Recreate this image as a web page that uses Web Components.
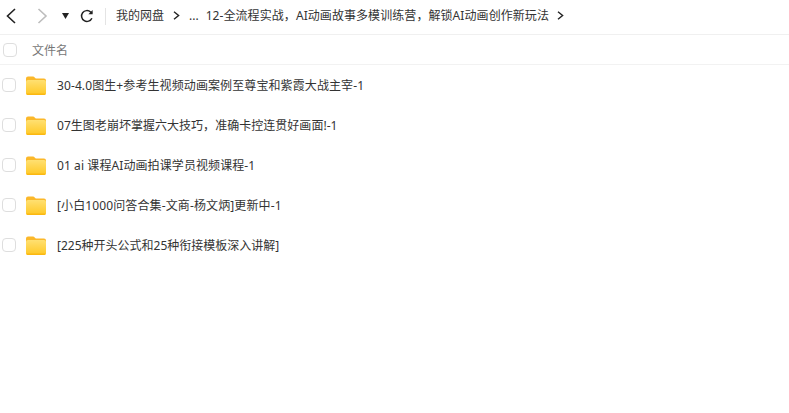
<!DOCTYPE html>
<html lang="zh">
<head>
<meta charset="utf-8">
<title>文件列表</title>
<style>
  html, body { margin: 0; height: 100%; background: #fff; }
  body { font-family: "Noto Sans", "Noto Sans CJK SC", sans-serif; color: #333; overflow: hidden; }
</style>
</head>
<body>
<pan-toolbar>
  <pan-crumb>我的网盘</pan-crumb>
  <pan-crumb>...</pan-crumb>
  <pan-crumb>12-全流程实战，AI动画故事多模训练营，解锁AI动画创作新玩法</pan-crumb>
</pan-toolbar>
<pan-header>文件名</pan-header>
<pan-row style="--track:.1px">30-4.0图生+参考生视频动画案例至尊宝和紫霞大战主宰-1</pan-row>
<pan-row style="--track:.03px">07生图老崩坏掌握六大技巧，准确卡控连贯好画面!-1</pan-row>
<pan-row style="--track:.09px">01 ai 课程AI动画拍课学员视频课程-1</pan-row>
<pan-row style="--track:.12px">[小白1000问答合集-文商-杨文炳]更新中-1</pan-row>
<pan-row>[225种开头公式和25种衔接模板深入讲解]</pan-row>

<script>
const CHECK = `
  .check {
    width: 12px; height: 12px;
    border: 1px solid #dedede;
    border-radius: 4px;
    background: #fff;
    flex: none;
  }
`;

class PanToolbar extends HTMLElement {
  constructor() {
    super();
    const shadow = this.attachShadow({ mode: "open" });
    shadow.innerHTML = `
      <style>
        :host {
          display: flex;
          align-items: center;
          height: 32px;
          padding: 0 0 2px 6px;
          border-bottom: 1px solid #f0f0f0;
        }
        svg { display: block; flex: none; }
        .back { margin-right: 20px; }
        .forward { margin-right: 14px; }
        .drop { margin-right: 11px; }
        .sep { width: 1px; height: 17px; background: #e4e4e4; margin: 0 10px 0 11px; flex: none; }
        .crumbs { display: flex; align-items: center; margin-top: -2px; }
      </style>
      <svg class="back" width="11" height="16" viewBox="0 0 11 16" fill="none" stroke="#222" stroke-width="1.6"><path d="M9 1 1.5 8 9 15"/></svg>
      <svg class="forward" width="11" height="16" viewBox="0 0 11 16" fill="none" stroke="#bdbdbd" stroke-width="1.6"><path d="M1.5 1 9 8l-7.5 7"/></svg>
      <svg class="drop" width="7" height="6" viewBox="0 0 7 6" fill="#222"><path d="M0 0h7L3.5 6z"/></svg>
      <svg width="14" height="14" viewBox="0 0 14 14" fill="none" stroke="#222" stroke-width="1.5"><path d="M11.9 9.2A5.4 5.4 0 1 1 10.6 3L12 4.4"/><path d="M12.6 1v4.2H8.4" fill="#222" stroke="none"/></svg>
      <div class="sep"></div>
      <div class="crumbs"><slot></slot></div>
    `;
  }
}

class PanCrumb extends HTMLElement {
  constructor() {
    super();
    const shadow = this.attachShadow({ mode: "open" });
    shadow.innerHTML = `
      <style>
        :host { display: flex; align-items: center; font-size: 12px; color: #333; white-space: nowrap; }
        svg { margin: 0 9px; display: block; }
        :host(:nth-of-type(2)) svg { display: none; }
        :host(:nth-of-type(2)) { margin-right: 7px; }
        :host(:nth-of-type(3)) { letter-spacing: .07px; }
        :host(:nth-of-type(3)) svg { margin: 0 8px; }
      </style>
      <slot></slot>
      <svg width="7" height="9" viewBox="0 0 7 9" fill="none" stroke="#222" stroke-width="1.4"><path d="M1 .8 5.6 4.5 1 8.2"/></svg>
    `;
  }
}

class PanHeader extends HTMLElement {
  constructor() {
    super();
    const shadow = this.attachShadow({ mode: "open" });
    shadow.innerHTML = `
      <style>
        :host {
          display: flex;
          align-items: center;
          height: 29px;
          padding-left: 3px;
          border-bottom: 1px solid #f2f2f2;
          font-size: 12px;
          color: #777;
        }
        ${CHECK}
        span { margin-left: 15px; }
      </style>
      <div class="check"></div>
      <span><slot></slot></span>
    `;
  }
}

class PanRow extends HTMLElement {
  constructor() {
    super();
    const shadow = this.attachShadow({ mode: "open" });
    shadow.innerHTML = `
      <style>
        :host {
          display: flex;
          align-items: center;
          height: 40px;
          padding-left: 2px;
          font-size: 12px;
          color: #333;
          white-space: nowrap;
          letter-spacing: var(--track, 0);
        }
        ${CHECK}
        svg { margin: 0 11px 0 10px; display: block; flex: none; }
      </style>
      <div class="check"></div>
      <svg width="20" height="19" viewBox="0 0 20 19">
        <defs><linearGradient id="f" x1="0" y1="0" x2="0" y2="1"><stop offset="0" stop-color="#ffe072"/><stop offset="1" stop-color="#ffc824"/></linearGradient></defs>
        <path d="M0 2.5A2 2 0 0 1 2 .5h5c.8 0 1.2.3 1.7.9L9.8 2.6H18a2 2 0 0 1 2 2V8H0z" fill="#fbb82a"/>
        <rect x="0" y="4" width="20" height="15" rx="2" fill="url(#f)"/>
        <path d="M0 17.6h20a2 2 0 0 1-2 1.4H2a2 2 0 0 1-2-1.4z" fill="#fbb810"/>
      </svg>
      <span><slot></slot></span>
    `;
  }
}

customElements.define("pan-toolbar", PanToolbar);
customElements.define("pan-crumb", PanCrumb);
customElements.define("pan-header", PanHeader);
customElements.define("pan-row", PanRow);
</script>
</body>
</html>
